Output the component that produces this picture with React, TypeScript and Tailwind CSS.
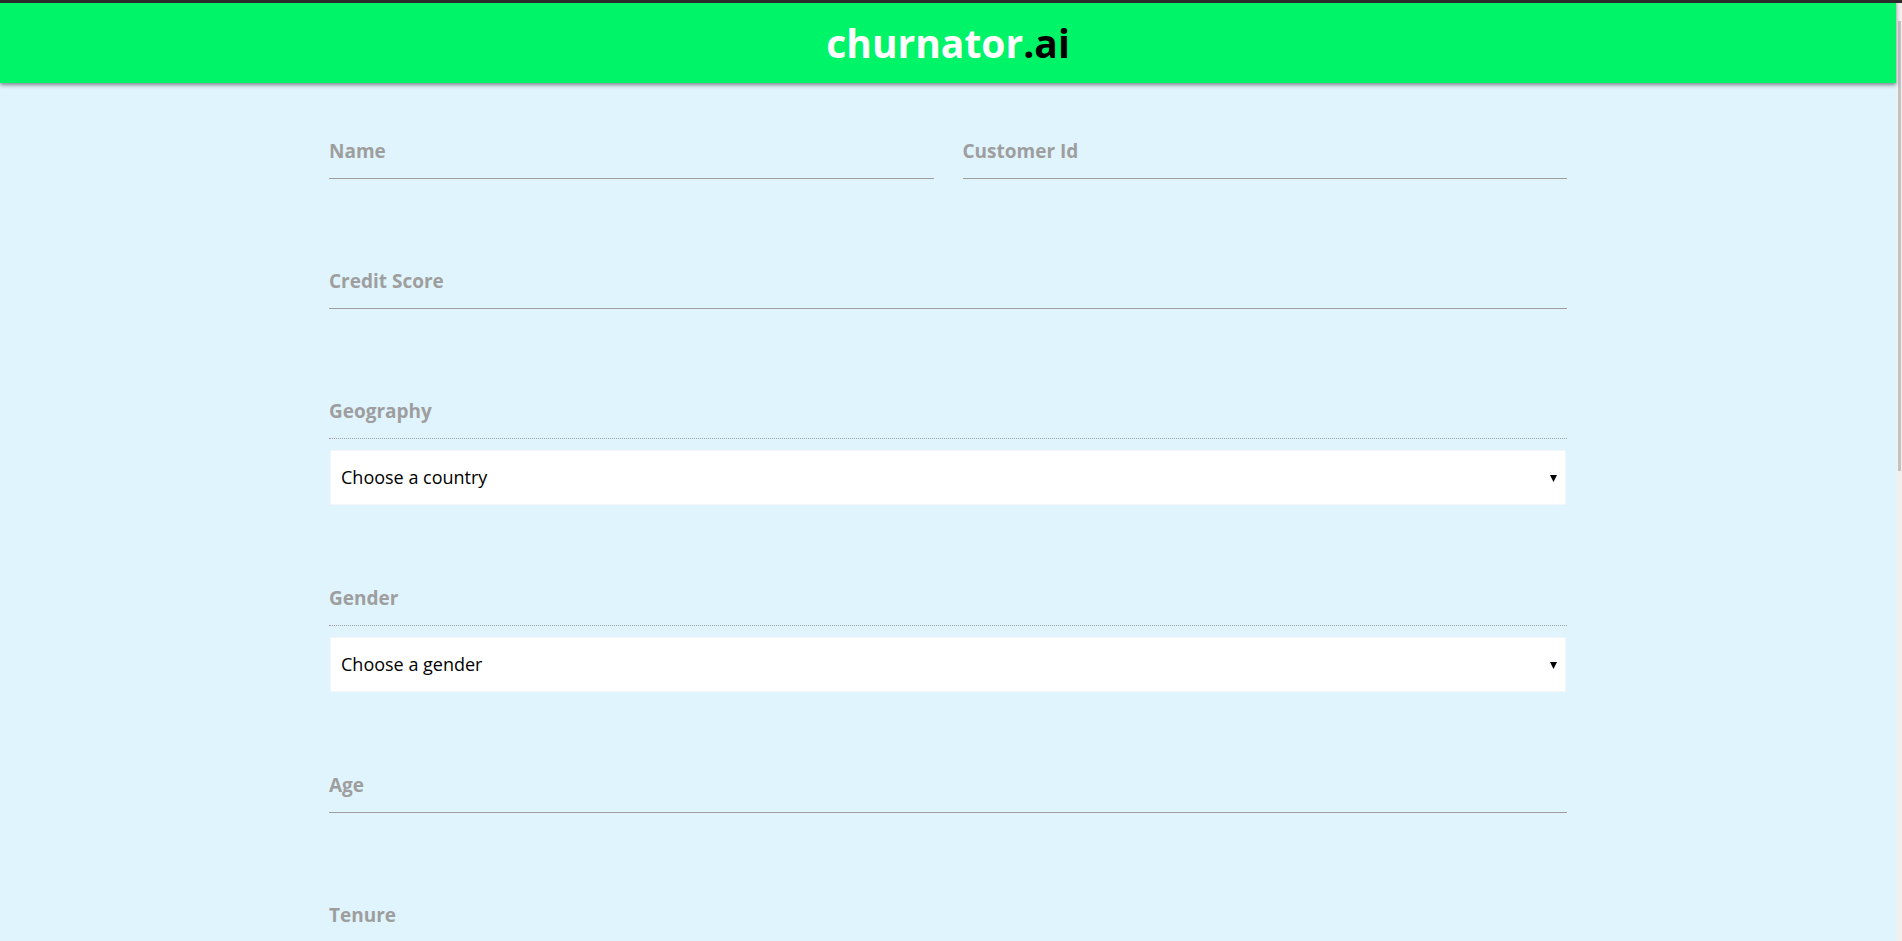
import React from 'react';

interface FieldProps {
  label: string;
  dotted?: boolean;
  className?: string;
}

function Field({ label, dotted, className = '' }: FieldProps) {
  return (
    <div
      className={`pb-[14px] border-b border-[#9e9e9e] ${dotted ? 'border-dotted' : 'border-solid'} ${className}`}
    >
      <span className="block text-[19px] leading-[26px] font-bold text-[#9e9e9e]">{label}</span>
    </div>
  );
}

function Select({ placeholder }: { placeholder: string }) {
  return (
    <div className="mt-[11px] mx-px h-[55px] bg-white border border-[#f2f6f8] flex items-center justify-between pl-[10px] pr-[8px]">
      <span className="text-[18px] text-black">{placeholder}</span>
      <svg width="7" height="7" viewBox="0 0 7 7" className="mt-px">
        <path d="M0 0h7L3.5 7z" fill="#000" />
      </svg>
    </div>
  );
}

export default function App() {
  return (
    <div className="h-screen w-full flex overflow-hidden bg-[#e0f4fd] font-['Open_Sans',sans-serif]">
      <div className="flex-1 flex flex-col min-w-0">
        {/* Header */}
        <header className="shrink-0 relative z-10 border-t-[3px] border-[#2b2b2b] h-[83px] bg-[#00f468] shadow-[0_2px_4px_rgba(0,0,0,0.45)] flex items-center justify-center">
          <h1 className="text-[39px] leading-[80px] font-bold">
            <span className="text-white">churnator</span>
            <span className="text-black">.ai</span>
          </h1>
        </header>

        {/* Form */}
        <main className="flex-1">
          <form className="w-[1238px] mx-auto pt-[55px] flex flex-col">
            <div className="grid grid-cols-2 gap-x-[29px] mb-[89px]">
              <Field label="Name" />
              <Field label="Customer Id" />
            </div>

            <Field label="Credit Score" className="mb-[89px]" />

            <div className="mb-[80px]">
              <Field label="Geography" dotted />
              <Select placeholder="Choose a country" />
            </div>

            <div className="mb-[80px]">
              <Field label="Gender" dotted />
              <Select placeholder="Choose a gender" />
            </div>

            <Field label="Age" className="mb-[89px]" />

            <Field label="Tenure" className="mb-[89px]" />

            <Field label="Balance" className="mb-[89px]" />
          </form>
        </main>
      </div>

      {/* Scrollbar */}
      <div className="w-[6px] shrink-0 bg-[#f0f0f0] flex flex-col">
        <div className="h-[3px] bg-[#2b2b2b]" />
        <div className="mt-[18px] ml-[2px] w-[3px] h-[450px] bg-[#c1c1c1]" />
      </div>
    </div>
  );
}
